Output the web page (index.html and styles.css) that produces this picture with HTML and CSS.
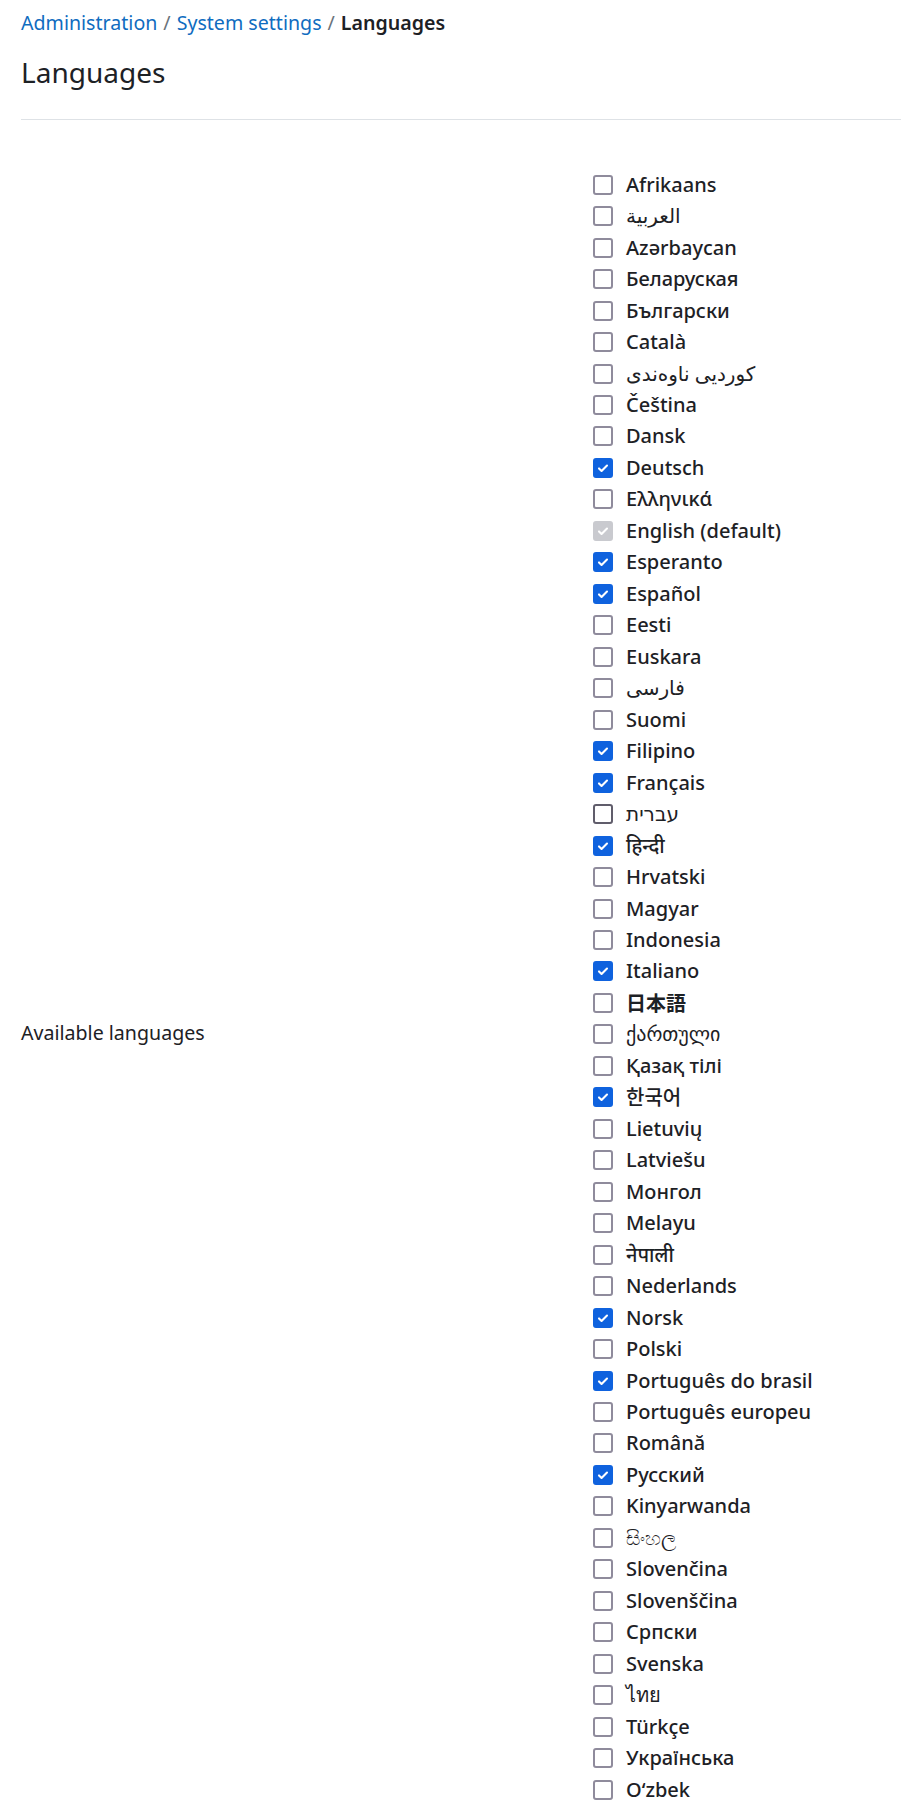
FILE: index.html
```html
<!DOCTYPE html>
<html lang="en">
<head>
<meta charset="utf-8">
<title>Languages</title>
<link rel="stylesheet" href="styles.css">
</head>
<body>
<div class="page">
  <nav class="breadcrumb">
    <a href="#">Administration</a><span class="sep">/</span><a href="#">System settings</a><span class="sep">/</span><span class="current">Languages</span>
  </nav>
  <h2 class="title">Languages</h2>
  <hr class="rule">
  <div class="setting">
    <div class="setting-label">Available languages</div>
    <div class="options">
      <label class="opt"><span class="box"></span><span class="txt">Afrikaans</span></label>
      <label class="opt"><span class="box"></span><span class="txt light" dir="rtl">العربية</span></label>
      <label class="opt"><span class="box"></span><span class="txt">Azərbaycan</span></label>
      <label class="opt"><span class="box"></span><span class="txt">Беларуская</span></label>
      <label class="opt"><span class="box"></span><span class="txt">Български</span></label>
      <label class="opt"><span class="box"></span><span class="txt">Català</span></label>
      <label class="opt"><span class="box"></span><span class="txt light" dir="rtl">کوردیی ناوەندی</span></label>
      <label class="opt"><span class="box"></span><span class="txt">Čeština</span></label>
      <label class="opt"><span class="box"></span><span class="txt">Dansk</span></label>
      <label class="opt"><span class="box checked"><svg viewBox="0 0 20 20"><path d="M5 10.5l3.2 3.2L15 7" /></svg></span><span class="txt">Deutsch</span></label>
      <label class="opt"><span class="box"></span><span class="txt">Ελληνικά</span></label>
      <label class="opt"><span class="box disabled"><svg viewBox="0 0 20 20"><path d="M5 10.5l3.2 3.2L15 7" /></svg></span><span class="txt">English (default)</span></label>
      <label class="opt"><span class="box checked"><svg viewBox="0 0 20 20"><path d="M5 10.5l3.2 3.2L15 7" /></svg></span><span class="txt">Esperanto</span></label>
      <label class="opt"><span class="box checked"><svg viewBox="0 0 20 20"><path d="M5 10.5l3.2 3.2L15 7" /></svg></span><span class="txt">Español</span></label>
      <label class="opt"><span class="box"></span><span class="txt">Eesti</span></label>
      <label class="opt"><span class="box"></span><span class="txt">Euskara</span></label>
      <label class="opt"><span class="box"></span><span class="txt light" dir="rtl">فارسی</span></label>
      <label class="opt"><span class="box"></span><span class="txt">Suomi</span></label>
      <label class="opt"><span class="box checked"><svg viewBox="0 0 20 20"><path d="M5 10.5l3.2 3.2L15 7" /></svg></span><span class="txt">Filipino</span></label>
      <label class="opt"><span class="box checked"><svg viewBox="0 0 20 20"><path d="M5 10.5l3.2 3.2L15 7" /></svg></span><span class="txt">Français</span></label>
      <label class="opt"><span class="box hover"></span><span class="txt" dir="rtl">עברית</span></label>
      <label class="opt"><span class="box checked"><svg viewBox="0 0 20 20"><path d="M5 10.5l3.2 3.2L15 7" /></svg></span><span class="txt">हिन्दी</span></label>
      <label class="opt"><span class="box"></span><span class="txt">Hrvatski</span></label>
      <label class="opt"><span class="box"></span><span class="txt">Magyar</span></label>
      <label class="opt"><span class="box"></span><span class="txt">Indonesia</span></label>
      <label class="opt"><span class="box checked"><svg viewBox="0 0 20 20"><path d="M5 10.5l3.2 3.2L15 7" /></svg></span><span class="txt">Italiano</span></label>
      <label class="opt"><span class="box"></span><span class="txt cjk">日本語</span></label>
      <label class="opt"><span class="box"></span><span class="txt light">ქართული</span></label>
      <label class="opt"><span class="box"></span><span class="txt">Қазақ тілі</span></label>
      <label class="opt"><span class="box checked"><svg viewBox="0 0 20 20"><path d="M5 10.5l3.2 3.2L15 7" /></svg></span><span class="txt kr">한국어</span></label>
      <label class="opt"><span class="box"></span><span class="txt">Lietuvių</span></label>
      <label class="opt"><span class="box"></span><span class="txt">Latviešu</span></label>
      <label class="opt"><span class="box"></span><span class="txt">Монгол</span></label>
      <label class="opt"><span class="box"></span><span class="txt">Melayu</span></label>
      <label class="opt"><span class="box"></span><span class="txt">नेपाली</span></label>
      <label class="opt"><span class="box"></span><span class="txt">Nederlands</span></label>
      <label class="opt"><span class="box checked"><svg viewBox="0 0 20 20"><path d="M5 10.5l3.2 3.2L15 7" /></svg></span><span class="txt">Norsk</span></label>
      <label class="opt"><span class="box"></span><span class="txt">Polski</span></label>
      <label class="opt"><span class="box checked"><svg viewBox="0 0 20 20"><path d="M5 10.5l3.2 3.2L15 7" /></svg></span><span class="txt">Português do brasil</span></label>
      <label class="opt"><span class="box"></span><span class="txt">Português europeu</span></label>
      <label class="opt"><span class="box"></span><span class="txt">Română</span></label>
      <label class="opt"><span class="box checked"><svg viewBox="0 0 20 20"><path d="M5 10.5l3.2 3.2L15 7" /></svg></span><span class="txt">Русский</span></label>
      <label class="opt"><span class="box"></span><span class="txt">Kinyarwanda</span></label>
      <label class="opt"><span class="box"></span><span class="txt">සිංහල</span></label>
      <label class="opt"><span class="box"></span><span class="txt">Slovenčina</span></label>
      <label class="opt"><span class="box"></span><span class="txt">Slovenščina</span></label>
      <label class="opt"><span class="box"></span><span class="txt">Српски</span></label>
      <label class="opt"><span class="box"></span><span class="txt">Svenska</span></label>
      <label class="opt"><span class="box"></span><span class="txt">ไทย</span></label>
      <label class="opt"><span class="box"></span><span class="txt">Türkçe</span></label>
      <label class="opt"><span class="box"></span><span class="txt">Українська</span></label>
      <label class="opt"><span class="box"></span><span class="txt">O‘zbek</span></label>
    </div>
  </div>
</div>
</body>
</html>
```

FILE: styles.css
```css
html, body {
  margin: 0;
  padding: 0;
  background: #ffffff;
}

body {
  font-family: "Noto Sans", "DejaVu Sans", "Noto Sans CJK JP", sans-serif;
  color: #1d2125;
  width: 901px;
  overflow: hidden;
}

.page {
  padding: 0 0 0 21px;
}

.breadcrumb {
  font-size: 19.6px;
  line-height: 30px;
  padding-top: 8px;
  white-space: nowrap;
}

.breadcrumb a {
  color: #0f6cbf;
  text-decoration: none;
}

.breadcrumb .sep {
  color: #6a737b;
  padding: 0 6px;
}

.breadcrumb .current {
  color: #1d2125;
  font-weight: 600;
}

.title {
  margin: 0;
  font-size: 28px;
  font-weight: 400;
  line-height: 40px;
  padding-top: 14px;
}

.rule {
  margin: 27px 0 0 0;
  border: 0;
  border-top: 1px solid #dee2e6;
  height: 0;
}

.setting {
  display: grid;
  grid-template-columns: 572px 1fr;
  align-items: center;
  padding-top: 49px;
}

.setting-label {
  font-size: 19.6px;
  line-height: 30px;
}

.options {
  display: grid;
  grid-auto-rows: 31.47px;
  padding-bottom: 92px;
}

.opt {
  display: flex;
  align-items: center;
  gap: 13px;
  min-height: 0;
  font-size: 20px;
  font-weight: 500;
  white-space: nowrap;
}

.box {
  width: 20px;
  height: 20px;
  box-sizing: border-box;
  border: 2px solid #8f8b9c;
  border-radius: 3px;
  background: #ffffff;
  flex: none;
  display: flex;
  align-items: center;
  justify-content: center;
}

.box svg {
  width: 20px;
  height: 20px;
  fill: none;
  stroke: #ffffff;
  stroke-width: 2.6;
  stroke-linecap: round;
  stroke-linejoin: round;
}

.box.checked {
  background: #0f62de;
  border-color: #0f62de;
}

.box.disabled {
  background: #c9cacf;
  border-color: #c9cacf;
}

.box.hover {
  border-color: #605d6b;
}

.txt {
  line-height: 30px;
}

.light {
  font-weight: 400;
}

.cjk {
  font-family: "Noto Sans CJK JP", sans-serif;
  font-weight: 700;
}

.kr {
  font-family: "Noto Sans CJK KR", sans-serif;
  font-weight: 500;
}
```
